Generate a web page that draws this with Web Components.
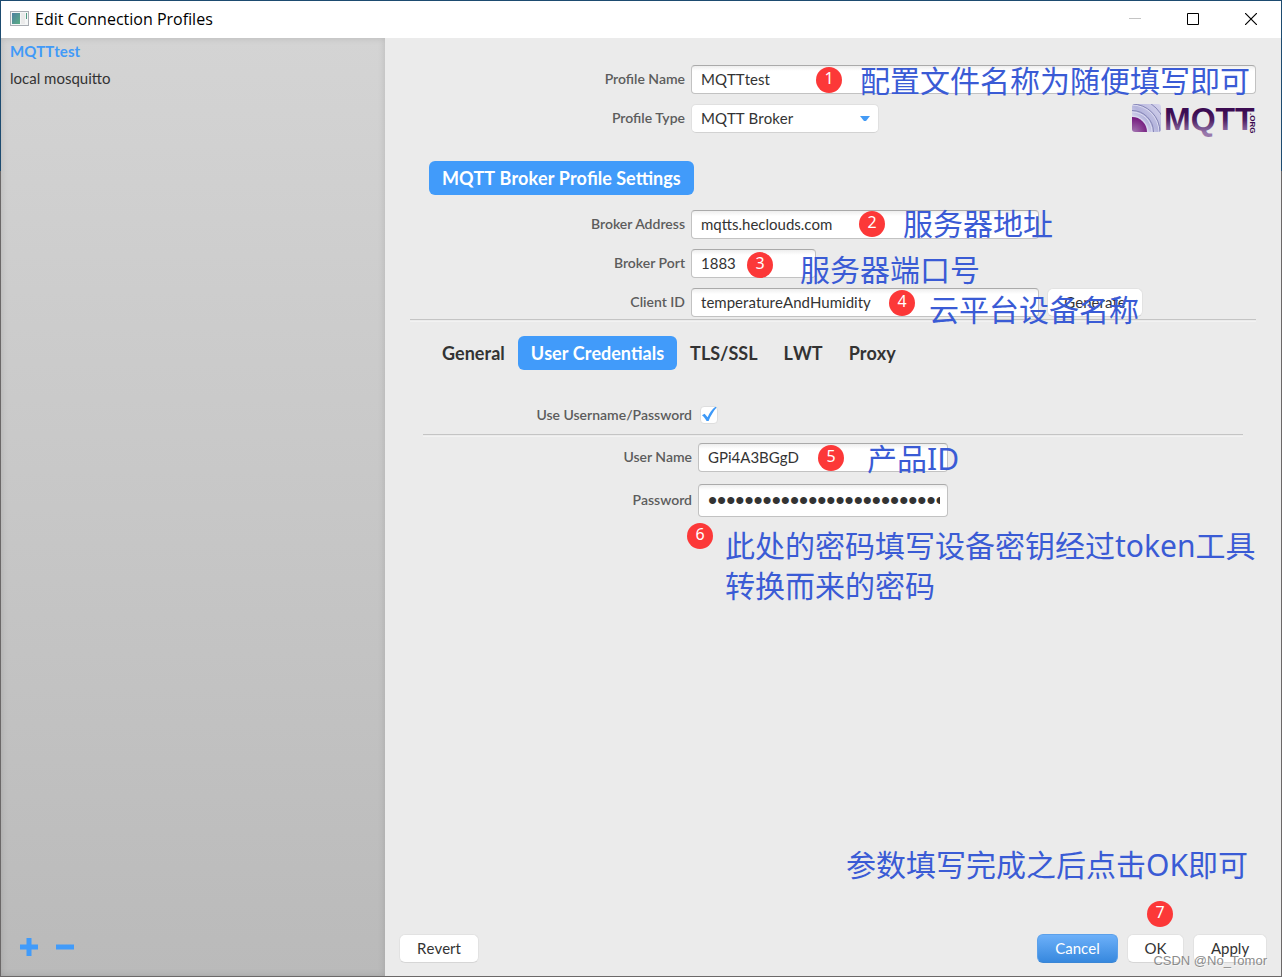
<!DOCTYPE html>
<html lang="en">
<head>
<meta charset="utf-8">
<title>Edit Connection Profiles</title>
<style>
  body { margin: 0; font-family: Lato, "Noto Sans CJK SC", sans-serif; font-size: 15px; color: #333; font-kerning: none; }
</style>
</head>
<body>
<profile-window>
  <title-bar slot="title">Edit Connection Profiles</title-bar>
  <profile-list slot="side"></profile-list>
  <profile-form></profile-form>
  <dialog-footer slot="footer"></dialog-footer>
</profile-window>

<script>
const define = (name, html, init) => customElements.define(name, class extends HTMLElement {
  constructor() {
    super();
    this.attachShadow({ mode: 'open' }).innerHTML = html;
  }
  connectedCallback() { if (init) init.call(this, this.shadowRoot); }
});

/* Red numbered step marker, placed over the control it explains */
define('step-badge', `
<style>
  :host { position: absolute; z-index: 2; left: var(--x); top: var(--y, 2px); width: 26px; height: 26px;
    border-radius: 50%; background: #fc3838; color: #fff; pointer-events: none;
    font: 16px/22px "Noto Sans", sans-serif; text-align: center; }
</style><slot></slot>`);

/* Blue explanatory remark laid over the form */
define('step-note', `
<style>
  :host { position: absolute; z-index: 2; left: var(--x); top: var(--y, -4px); white-space: nowrap;
    color: #3a5bd5; pointer-events: none;
    font: 30px/40px "Noto Sans", "Noto Sans CJK SC", sans-serif; }
</style><slot></slot>`);

define('push-button', `
<style>
  :host { display: block; position: relative; }
  button { display: block; width: 100%; height: 29px; padding: 0; font: 15px/27px Lato, sans-serif; font-kerning: none; color: #333;
    background: #fff; border: 1px solid #e2e2e2; border-bottom-color: #d6d6d6; border-radius: 6px; }
  :host([primary]) button { color: #fff; background: linear-gradient(#6cb0f9, #3788de); border-color: #5ba0ea; border-bottom-color: #3a86d6; }
</style><button type="button"></button><slot></slot>`, function (r) {
  r.querySelector('button').textContent = this.getAttribute('label');
});

define('form-field', `
<style>
  :host { display: grid; grid-template-columns: var(--label, 275px) minmax(0, 1fr); column-gap: 6px; align-items: center; }
  label { text-align: right; font: 600 14px/20px Lato, sans-serif; font-kerning: normal; color: #5c5c5c; padding-bottom: 2px; }
  .row { display: flex; align-items: center; gap: 8px; position: relative; }
  input { box-sizing: border-box; width: var(--width, 100%); height: var(--height, 29px); margin: 0; padding: 0 7px 2px 9px;
    font: 15px/20px Lato, sans-serif; font-kerning: none; color: #333; border: 1px solid #c2c2c2; border-top-color: #aaa; border-radius: 4px;
    background: linear-gradient(#eee, #fff 5px); outline: none; }
  input[type=password] { font: 26px/30px "Liberation Sans", sans-serif; padding-bottom: 0; }
</style>
<label for="field"></label>
<div class="row"><input id="field"><slot></slot></div>`, function (r) {
  r.querySelector('label').textContent = this.getAttribute('label');
  const input = r.querySelector('input');
  input.type = this.getAttribute('type') || 'text';
  input.value = this.getAttribute('value');
});

define('select-field', `
<style>
  :host { display: grid; grid-template-columns: 275px minmax(0, 1fr); column-gap: 6px; align-items: center; }
  label { text-align: right; font: 600 14px/20px Lato, sans-serif; font-kerning: normal; color: #5c5c5c; padding-bottom: 2px; }
  .row { display: flex; justify-content: space-between; align-items: center; }
  .box { position: relative; width: 188px; }
  select { appearance: none; display: block; width: 100%; height: 29px; padding: 0 9px 1px; font: 15px/20px Lato, sans-serif; font-kerning: none; color: #333;
    background: #fff; border: 1px solid #e0e0e0; border-bottom-color: #d2d2d2; border-radius: 5px; }
  svg { position: absolute; right: 9px; top: 12px; pointer-events: none; }
</style>
<label for="type">Profile Type</label>
<div class="row">
  <div class="box">
    <select id="type"><option>MQTT Broker</option></select>
    <svg width="10" height="5" viewBox="0 0 10 5"><path d="M0 0h10L6 5H4z" fill="#449bf5"/></svg>
  </div>
  <slot></slot>
</div>`);

define('check-field', `
<style>
  :host { display: grid; grid-template-columns: 269px 1fr; column-gap: 8px; align-items: center; }
  label { text-align: right; font: 600 14px/20px Lato, sans-serif; font-kerning: normal; color: #5c5c5c; }
  .box { position: relative; width: 18px; height: 18px; }
  input { appearance: none; display: block; box-sizing: border-box; width: 18px; height: 18px; margin: 0; background: #fff;
    border: 1px solid #dedede; border-radius: 4px; }
  svg { position: absolute; left: 2px; top: 0; pointer-events: none; }
</style>
<label for="use">Use Username/Password</label>
<div class="box"><input id="use" type="checkbox" checked>
<svg width="16" height="16" viewBox="0 0 16 16"><path d="M0 9.200 2.600 7.700 5.600 11.300C7.600 6.600 10 3.200 13.500 .8L14.600 1.500C11.200 5.500 8.500 10 6.600 15H4.600C3.500 12.800 2 10.800 0 9.200z" fill="#3d99f8"/></svg></div>`);

define('mqtt-logo', `
<style>:host, svg { display: block; } svg { overflow: visible; }</style>
<svg width="124" height="29" viewBox="0 0 124 29" role="img" aria-label="MQTT.ORG">
  <defs>
    <linearGradient id="word" gradientUnits="userSpaceOnUse" x1="0" y1="3" x2="0" y2="29"><stop offset=".2" stop-color="#3c0c52"/><stop offset=".5" stop-color="#4d2064"/><stop offset="1" stop-color="#9878ac"/></linearGradient>
    <linearGradient id="sky" x1="0" y1="1" x2="1" y2="0"><stop offset="0" stop-color="#fff"/><stop offset=".5" stop-color="#b4b4dc"/><stop offset="1" stop-color="#d8d6ee"/></linearGradient>
    <radialGradient id="core" gradientUnits="userSpaceOnUse" cx="2" cy="28" r="16"><stop stop-color="#a274b0"/><stop offset="1" stop-color="#701078"/></radialGradient>
    <clipPath id="tile"><rect width="29" height="28" rx="3"/></clipPath>
  </defs>
  <g clip-path="url(#tile)">
    <rect width="29" height="29" fill="url(#sky)"/>
    <g fill="none" stroke="#dcdcf0" stroke-width="1"><circle cx="0" cy="28" r="16"/><circle cx="0" cy="28" r="20"/><circle cx="0" cy="28" r="27"/></g>
    <g fill="none" stroke="#8686b6" stroke-width="1"><circle cx="0" cy="28" r="21.500"/><circle cx="0" cy="28" r="28"/><circle cx="0" cy="28" r="34"/></g>
    <circle cx="0" cy="28" r="15" fill="url(#core)"/>
  </g>
  <text x="32" y="26" font-family="Liberation Sans, sans-serif" font-size="32" font-weight="bold" fill="url(#word)">MQTT</text>
  <text transform="translate(118 9) rotate(90)" font-family="Liberation Sans, sans-serif" font-size="8" font-weight="bold" fill="#3c0c52">.ORG</text>
</svg>`);

define('title-bar', `
<style>
  :host { display: flex; align-items: center; height: 37px; padding: 0 1px 0 9px; gap: 5px; background: #fff; color: #000; }
  h1 { flex: 1; margin: 0; padding-bottom: 2px; font: 16px/20px "Open Sans", sans-serif; }
  nav { display: flex; height: 100%; }
  button { width: 58px; padding: 0 0 2px; border: 0; background: none; display: grid; place-items: center; }
  svg { display: block; }
  .app { margin-bottom: 2px; }
</style>
<svg class="app" width="20" height="16" viewBox="0 0 20 16">
  <defs><linearGradient id="g" x1="0" y1="0" x2="1" y2="1"><stop stop-color="#4d80a0"/><stop offset="1" stop-color="#5aae84"/></linearGradient></defs>
  <rect x=".5" y=".5" width="18" height="14" fill="#f4f6f6" stroke="#a9adb3"/><rect x="2" y="2" width="8" height="11" fill="url(#g)"/>
  <rect x="11" y="2" width="4" height="11" fill="#eaeaea"/><rect x="16" y="2" width="1" height="6" fill="#4f9a80"/>
</svg>
<h1><slot></slot></h1>
<nav>
  <button type="button" aria-label="Minimize"><svg width="12" height="12"><path d="M0 5.500h12" stroke="#c4c4c4"/></svg></button>
  <button type="button" aria-label="Maximize"><svg width="12" height="12"><path d="M.5.5h11v11H.5z" fill="none" stroke="#000"/></svg></button>
  <button type="button" aria-label="Close"><svg width="12" height="12"><path d="M0 0 12 12M12 0 0 12" stroke="#000" stroke-width="1.200"/></svg></button>
</nav>`);

define('profile-list', `
<style>
  :host { display: flex; flex-direction: column; justify-content: space-between; background: linear-gradient(#d4d4d4, #bababa);
    box-shadow: inset 0 0 7px #0002; }
  ul { list-style: none; margin: 0; padding: 0; }
  li { padding: 0 9px; font: 15px/27px Lato, sans-serif; font-kerning: none; }
  li.on { color: #419af8; font-weight: bold; }
  div { display: flex; gap: 18px; padding: 0 19px 20px; }
  button { padding: 0; border: 0; background: none; }
  svg { display: block; }
</style>
<ul><li class="on">MQTTtest</li><li>local mosquitto</li></ul>
<div>
  <button type="button" aria-label="Add profile"><svg width="18" height="18"><path d="M9 0v18M0 9h18" stroke="#419bfa" stroke-width="5"/></svg></button>
  <button type="button" aria-label="Remove profile"><svg width="18" height="18"><path d="M0 9h18" stroke="#419bfa" stroke-width="5"/></svg></button>
</div>`);

define('profile-form', `
<style>
  :host { display: block; padding: 27px 25px 0; }
  .stack { display: grid; gap: 10px; }
  h2 { width: max-content; box-sizing: border-box; margin: 28px 0 15px 19px; padding: 0 13px; font: bold 18px/34px Lato, sans-serif; font-kerning: none;
    color: #fff; background: #419bfa; border-radius: 6px; }
  hr { margin: 2px 0 0; border: 0; height: 1px; background: #c4c4c4; box-shadow: 0 2px #f2f2f2; }
  .tabs { display: flex; margin: 16px 0 0 19px; }
  .tabs button { padding: 0 13px; border: 0; border-radius: 6px; background: none; color: #333; font: bold 18px/34px Lato, sans-serif; font-kerning: none; }
  .tabs button[aria-selected=true] { color: #fff; background: #419bfa; }
  .pane { padding: 35px 13px 0; --label: 269px; }
  .pane hr { margin: 9px 0 8px; }
  push-button { width: 96px; }
</style>
<div class="stack">
  <form-field label="Profile Name" value="MQTTtest">
    <step-badge style="--x:125px">1</step-badge><step-note style="--x:169px">配置文件名称为随便填写即可</step-note>
  </form-field>
  <select-field><mqtt-logo></mqtt-logo></select-field>
</div>
<h2>MQTT Broker Profile Settings</h2>
<div class="stack">
  <form-field label="Broker Address" value="mqtts.heclouds.com" style="--width:348px">
    <step-badge style="--x:168px;--y:1px">2</step-badge><step-note style="--x:212px;--y:-6px">服务器地址</step-note>
  </form-field>
  <form-field label="Broker Port" value="1883" style="--width:125px">
    <step-badge style="--x:56px;--y:3px">3</step-badge><step-note style="--x:109px;--y:1px">服务器端口号</step-note>
  </form-field>
  <form-field label="Client ID" value="temperatureAndHumidity" style="--width:348px">
    <push-button label="Generate"></push-button>
    <step-badge style="--x:198px">4</step-badge><step-note style="--x:238px;--y:2px">云平台设备名称</step-note>
  </form-field>
</div>
<hr>
<div class="tabs" role="tablist">
  <button type="button" role="tab">General</button>
  <button type="button" role="tab" aria-selected="true">User Credentials</button>
  <button type="button" role="tab">TLS/SSL</button>
  <button type="button" role="tab">LWT</button>
  <button type="button" role="tab">Proxy</button>
</div>
<div class="pane" role="tabpanel">
  <check-field></check-field>
  <hr>
  <div class="stack" style="row-gap:12px">
    <form-field label="User Name" value="GPi4A3BGgD" style="--width:250px">
      <step-badge style="--x:120px">5</step-badge><step-note style="--x:169px">产品ID</step-note>
    </form-field>
    <form-field label="Password" type="password" value="version2018product0123456789abcdef012345" style="--width:250px;--height:33px">
      <step-badge style="--x:-11px;--y:39px">6</step-badge>
      <step-note style="--x:27px;--y:42px">此处的密码填写设备密钥经过token工具<br>转换而来的密码</step-note>
    </form-field>
  </div>
</div>`);

define('dialog-footer', `
<style>
  :host { display: flex; gap: 9px; padding: 0 14px 13px 14px; position: relative; }
  .w1 { width: 80px; margin-right: auto; } .w2 { width: 81px; } .w3 { width: 57px; } .w4 { width: 74px; }
  p { position: absolute; right: 14px; bottom: 6px; margin: 0; font: 13px/18px "Liberation Sans", sans-serif; color: #8c8c8c; text-shadow: 1px 1px #fff8; }
</style>
<push-button class="w1" label="Revert"></push-button>
<push-button class="w2" label="Cancel" primary></push-button>
<push-button class="w3" label="OK">
  <step-badge style="--x:20px;--y:-33px">7</step-badge><step-note style="--x:-281px;--y:-89px">参数填写完成之后点击OK即可</step-note>
</push-button>
<push-button class="w4" label="Apply"></push-button>
<p>CSDN @No_Tomor</p>`);

/* Window frame: title across the top, list at the side, form and footer beside it */
define('profile-window', `
<style>
  :host { display: grid; box-sizing: border-box; min-height: 100vh; padding: 1px;
    grid-template: "title title" auto "side main" 1fr "side footer" auto / 384px minmax(0, 1fr);
    background: linear-gradient(#1d4b70 171px, #6b6868 171px); }
  slot[name=title]::slotted(*) { grid-area: title; }
  slot[name=side]::slotted(*) { grid-area: side; }
  slot[name=footer]::slotted(*) { grid-area: footer; background: #ebebeb; }
  slot:not([name])::slotted(*) { grid-area: main; background: #ebebeb; }
</style>
<slot name="title"></slot><slot name="side"></slot><slot></slot><slot name="footer"></slot>`);
</script>
</body>
</html>
